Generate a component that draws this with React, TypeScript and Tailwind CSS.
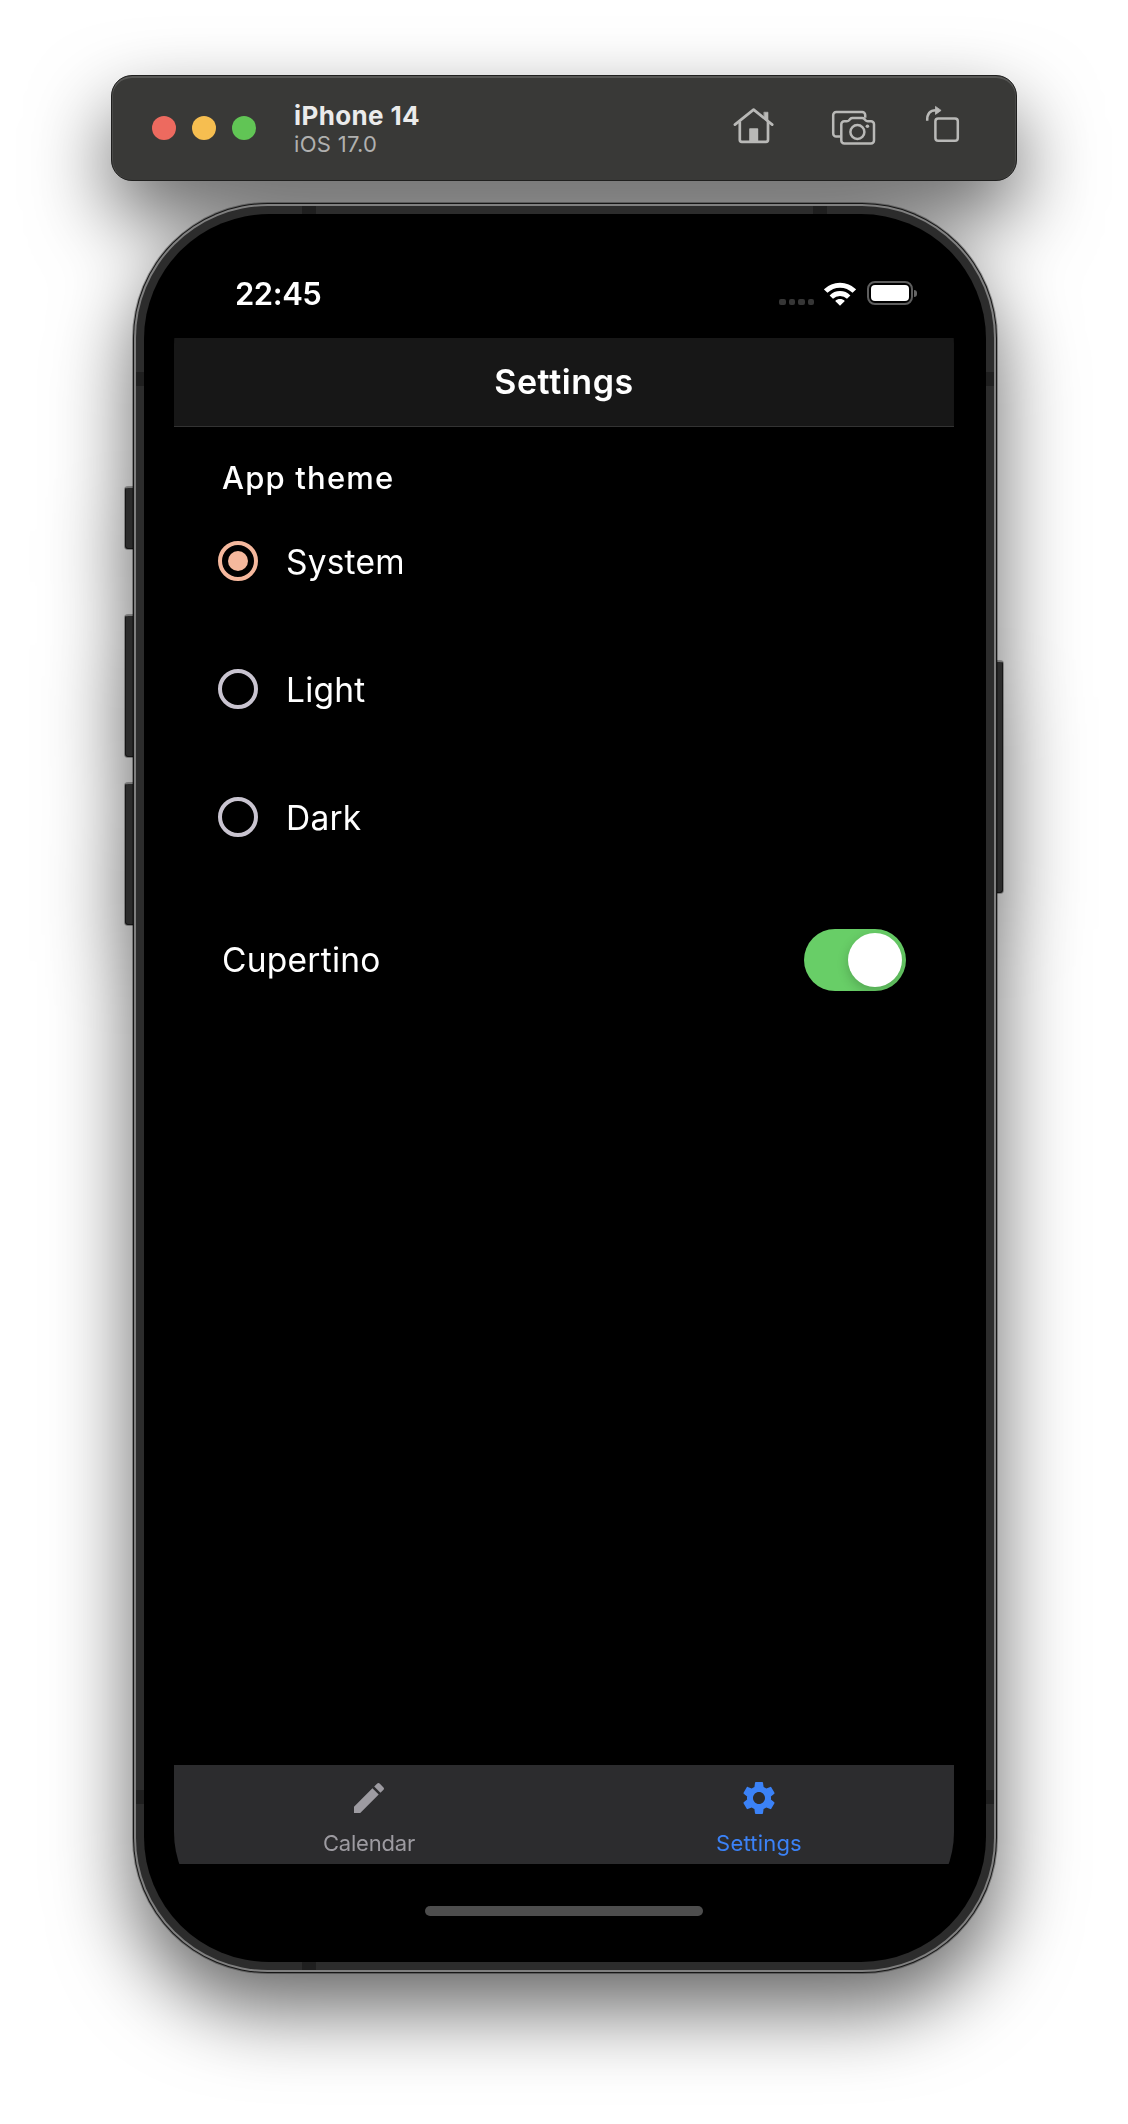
import React from 'react';
import { MdEdit, MdSettings } from 'react-icons/md';

function HomeIcon() {
  return (
    <svg width="42" height="38" viewBox="0 0 42 38" fill="none" stroke="#b9b9b7" strokeWidth="2.7" strokeLinecap="round" strokeLinejoin="round">
      <path d="M31.2 5.2h3.8v9.8l-3.8-3.2z" fill="#b9b9b7" strokeWidth="0.6" />
      <path d="M1.9 17.6 20.6 2.6 39.2 17.6" />
      <path d="M6.8 14.5V32.8a2 2 0 0 0 2 2H33a2 2 0 0 0 2-2V14.5" strokeLinecap="butt" />
      <rect x="16.2" y="21.2" width="9" height="13.8" rx="0.8" fill="#b9b9b7" stroke="none" />
    </svg>
  );
}

function CameraIcon() {
  return (
    <svg width="45" height="36" viewBox="0 0 45 36" fill="none" stroke="#b9b9b7" strokeWidth="2.5" strokeLinejoin="round">
      <path d="M34.2 7.8V5a3 3 0 0 0-3-3H5.2a3 3 0 0 0-3 3v18.5a3 3 0 0 0 3 3H9.5" />
      <path d="M13.3 11.3h2.6c1 0 1.6-.3 2.2-1l1.2-1.4c.6-.7 1.2-1 2.2-1h9.6c1 0 1.6.3 2.2 1l1.2 1.4c.6.7 1.2 1 2.2 1H40a3 3 0 0 1 3 3v16.3a3 3 0 0 1-3 3H13.3a3 3 0 0 1-3-3V14.3a3 3 0 0 1 3-3z" />
      <circle cx="26.4" cy="22" r="7" />
      <circle cx="36.4" cy="16.3" r="1.8" fill="#b9b9b7" stroke="none" />
    </svg>
  );
}

function RotateIcon() {
  return (
    <svg width="35" height="38" viewBox="0 0 35 38" fill="none" stroke="#b9b9b7" strokeWidth="2.5">
      <rect x="10.4" y="13.4" width="22.4" height="22.4" rx="2.8" />
      <path d="M2.2 15.8C2 8.6 4.8 5.4 11 5.3" />
      <path d="M10.5 1.4v8l5.6-4z" fill="#b9b9b7" strokeWidth="0.8" strokeLinejoin="round" />
    </svg>
  );
}

function WifiIcon() {
  return (
    <svg width="32" height="25" viewBox="0 0 32 25" fill="none" stroke="#fff">
      <path d="M1.7 10.1a20.3 20.3 0 0 1 28.6 0" strokeWidth="5" />
      <path d="M7.3 16.1a12.3 12.3 0 0 1 17.4 0" strokeWidth="4.8" />
      <path d="M11.2 19.9c2.7-2.6 6.9-2.6 9.6 0L16 24.8z" fill="#fff" stroke="none" />
    </svg>
  );
}

function Toolbar() {
  return (
    <div className="ml-[111px] flex h-[106px] w-[906px] items-center rounded-[21px] border border-[#1f1f1e] bg-[#393937] pl-10 pr-14 shadow-[inset_0_2px_0_#575755,inset_1px_0_0_#4a4a48,inset_-1px_0_0_#4a4a48]">
      <div className="flex gap-4">
        <span className="size-6 rounded-full bg-[#ed6a5f]" />
        <span className="size-6 rounded-full bg-[#f6be50]" />
        <span className="size-6 rounded-full bg-[#61c555]" />
      </div>
      <div className="ml-[38px] grow whitespace-nowrap pt-[3px] leading-[29px]">
        <div className="text-[26px] font-bold tracking-[0.37px] text-[#ebebeb]">iPhone 14</div>
        <div className="text-[22px] tracking-[0.3px] text-[#b0b0af]">iOS 17.0</div>
      </div>
      <div className="flex items-center">
        <div className="pb-1"><HomeIcon /></div>
        <div className="ml-14 pb-px"><CameraIcon /></div>
        <div className="ml-[49px] pb-[9px]"><RotateIcon /></div>
      </div>
    </div>
  );
}

function StatusBar() {
  return (
    <div className="flex h-[94px] shrink-0 items-center pl-[61px] pr-[37px] pt-1.5">
      <div className="grow text-[31px] font-semibold tracking-[-0.45px] text-white">22:45</div>
      <div className="flex gap-[3px] pt-4">
        <span className="size-[6.5px] rounded-[2px] bg-[#363636]" />
        <span className="size-[6.5px] rounded-[2px] bg-[#363636]" />
        <span className="size-[6.5px] rounded-[2px] bg-[#363636]" />
        <span className="size-[6.5px] rounded-[2px] bg-[#363636]" />
      </div>
      <div className="ml-2.5 pb-0.5"><WifiIcon /></div>
      <div className="ml-[11px] mb-0.5 flex h-6 w-[46px] rounded-[8px] border-2 border-[#5e5e5e] p-[2px]">
        <div className="grow rounded-[4px] bg-white" />
      </div>
      <div className="mb-0.5 ml-[1px] h-[7px] w-[3px] rounded-r-full bg-[#666]" />
    </div>
  );
}

function RadioRow({ label, selected }: { label: string; selected?: boolean }) {
  return (
    <div className="flex h-32 items-center gap-7 pb-px pl-11">
      {selected ? (
        <span className="flex size-10 items-center justify-center rounded-full border-4 border-[#f5b89d]">
          <span className="size-5 rounded-full bg-[#f5b89d]" />
        </span>
      ) : (
        <span className="size-10 rounded-full border-4 border-[#c9c4d0]" />
      )}
      <span className="pt-[3px] text-[33.5px] tracking-[0.2px] text-white">{label}</span>
    </div>
  );
}

function Tab({ icon, label, active }: { icon: React.ReactNode; label: string; active?: boolean }) {
  return (
    <div className={`flex flex-1 flex-col items-center pt-[13px] ${active ? 'text-[#3b82f7]' : 'text-[#9d9ba1]'}`}>
      {icon}
      <span className={`mt-[11px] text-[22px] leading-7 ${active ? 'tracking-[0.2px]' : 'tracking-[-0.2px]'}`}>{label}</span>
    </div>
  );
}

function Screen() {
  return (
    <div className="flex h-[1688px] w-[780px] flex-col overflow-hidden rounded-[100px] bg-black">
      <StatusBar />
      <div className="flex h-[89px] shrink-0 items-center justify-center border-b border-[#333] bg-[#171717] pb-px">
        <h1 className="text-[34px] font-semibold tracking-[0.6px] text-white">Settings</h1>
      </div>
      <div className="grow pt-8">
        <h2 className="mb-px pl-12 text-[31px] font-medium leading-[37px] tracking-[1.18px] text-white">App theme</h2>
        <RadioRow label="System" selected />
        <RadioRow label="Light" />
        <RadioRow label="Dark" />
        <div className="flex h-[158px] items-center justify-between px-12">
          <span className="pt-px text-[33.5px] tracking-[0.25px] text-white">Cupertino</span>
          <span className="flex h-[62px] w-[102px] items-center justify-end rounded-full bg-[#68ce67] pr-1">
            <span className="size-[54px] rounded-full bg-white shadow-[0_4px_12px_rgba(0,0,0,0.2)]" />
          </span>
        </div>
      </div>
      <div className="flex h-[99px] shrink-0 bg-[#2c2c2e]">
        <Tab icon={<MdEdit size={40} />} label="Calendar" />
        <Tab icon={<MdSettings size={40} />} label="Settings" active />
      </div>
      <div className="flex h-[68px] shrink-0 justify-center pt-[42px]">
        <div className="h-2.5 w-[278px] rounded-full bg-[#4d4d4d]" />
      </div>
    </div>
  );
}

function SideButton({ className }: { className: string }) {
  return <div className={`absolute bg-[#2b2b2b] shadow-[0_0_0_1px_rgba(0,0,0,0.3)] ${className}`} />;
}

function AntennaBand({ className }: { className: string }) {
  return <div className={`absolute bg-[#1f1f1f] ${className}`} />;
}

function Phone() {
  return (
    <div className="relative ml-[133px] mt-[22px] h-[1770px] w-[864px]">
      <SideButton className="-left-2 top-[284px] h-[62px] w-2 rounded-l-[3px] border border-r-0 border-t-[#777] border-[#151515]" />
      <SideButton className="-left-2 top-[412px] h-[142px] w-2 rounded-l-[3px] border border-r-0 border-t-[#777] border-[#151515]" />
      <SideButton className="-left-2 top-[580px] h-[142px] w-2 rounded-l-[3px] border border-r-0 border-t-[#777] border-[#151515]" />
      <SideButton className="-right-[6px] top-[458px] h-[232px] w-[6px] rounded-r-[3px] border border-l-0 border-t-[#777] border-[#151515]" />
      <div className="relative size-full rounded-[135px] bg-[#161616] p-px shadow-[0_0_0_1px_rgba(0,0,0,0.3)]">
        <div className="size-full rounded-[134px] bg-[#7f7f7f] p-[2px]">
          <div className="size-full rounded-[132px] bg-[#2c2c2c] p-2">
            <div className="size-full rounded-[125px] bg-black pl-[30px] pt-[30px]">
              <Screen />
            </div>
          </div>
        </div>
        <AntennaBand className="left-[169px] top-[3px] h-2 w-3.5" />
        <AntennaBand className="left-[680px] top-[3px] h-2 w-3.5" />
        <AntennaBand className="left-[169px] bottom-[3px] h-2 w-3.5" />
        <AntennaBand className="left-[3px] top-[169px] h-3.5 w-2" />
        <AntennaBand className="right-[3px] top-[169px] h-3.5 w-2" />
        <AntennaBand className="left-[3px] top-[1587px] h-3.5 w-2" />
        <AntennaBand className="right-[3px] top-[1587px] h-3.5 w-2" />
      </div>
    </div>
  );
}

export default function App() {
  return (
    <div className="h-[2124px] w-[1128px] overflow-hidden bg-white font-['Inter',sans-serif]">
      <div className="pt-[75px] [filter:drop-shadow(0_36px_40px_rgba(0,0,0,0.6))]">
        <Toolbar />
        <Phone />
      </div>
    </div>
  );
}
